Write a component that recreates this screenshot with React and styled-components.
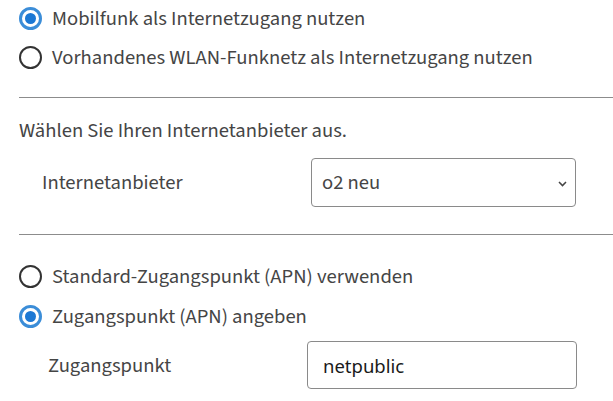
import React, { useState } from "react";
import styled, { createGlobalStyle } from "styled-components";

const GlobalStyle = createGlobalStyle`
  html, body {
    margin: 0;
    padding: 0;
    background: #fff;
  }
  body {
    font-family: "Source Sans 3", "Lato", "Liberation Sans", sans-serif;
    font-size: 20.6px;
    color: #454545;
  }
`;

const Page = styled.div`
  width: 613px;
  height: 401px;
  overflow: hidden;
  padding-left: 19px;
  box-sizing: border-box;
`;

const RadioRow = styled.label`
  display: flex;
  align-items: center;
  gap: 10px;
  height: ${(p) => p.$height || 40}px;
  margin-top: ${(p) => p.$top || 0}px;
  cursor: pointer;
  white-space: nowrap;
`;

const RadioCircle = styled.span`
  width: 23px;
  height: 23px;
  box-sizing: border-box;
  border-radius: 50%;
  border: ${(p) => (p.$checked ? "3px solid #3b8dd8" : "2px solid #333")};
  background: #fff;
  display: flex;
  align-items: center;
  justify-content: center;
  flex-shrink: 0;
  &::after {
    content: "";
    width: 11px;
    height: 11px;
    border-radius: 50%;
    background: #1c78d4;
    display: ${(p) => (p.$checked ? "block" : "none")};
  }
`;

const Divider = styled.hr`
  border: 0;
  height: 1px;
  background: #8c8c8c;
  margin: ${(p) => p.$top || 0}px 0 0 0;
`;

const Intro = styled.p`
  margin: 20px 0 0 0;
  line-height: 26px;
  white-space: nowrap;
`;

const FieldRow = styled.div`
  display: flex;
  align-items: center;
  margin-top: ${(p) => p.$top || 0}px;
  padding-left: ${(p) => p.$indent}px;
`;

const FieldLabel = styled.span`
  width: ${(p) => p.$width}px;
  flex-shrink: 0;
  white-space: nowrap;
`;

const SelectBox = styled.div`
  width: 265px;
  height: 49px;
  box-sizing: border-box;
  border: 1px solid #8a8a8a;
  border-radius: 4px;
  display: flex;
  align-items: center;
  padding: 0 8px 0 10px;
  background: #fff;
  cursor: pointer;
`;

const SelectValue = styled.span`
  flex: 1;
  padding-bottom: 1px;
`;

const Chevron = styled.svg`
  width: 9px;
  height: 6px;
  flex-shrink: 0;
  margin-top: 3px;
`;

const TextInput = styled.input`
  width: 270px;
  height: 48px;
  box-sizing: border-box;
  border: 1px solid #8a8a8a;
  border-radius: 4px;
  padding: 0 15px;
  font-family: "Noto Sans", "Open Sans", sans-serif;
  font-size: 18.5px;
  color: #1a1a1a;
  outline: none;
  background: #fff;
`;

function Radio({ checked, onSelect, children, height, top }) {
  return (
    <RadioRow $height={height} $top={top} onClick={onSelect}>
      <RadioCircle $checked={checked} />
      <span>{children}</span>
    </RadioRow>
  );
}

export default function App() {
  const [access, setAccess] = useState("mobil");
  const [apn, setApn] = useState("custom");
  const [apnValue, setApnValue] = useState("netpublic");

  return (
    <Page>
      <GlobalStyle />
      <Radio height={37} checked={access === "mobil"} onSelect={() => setAccess("mobil")}>
        Mobilfunk als Internetzugang nutzen
      </Radio>
      <Radio checked={access === "wlan"} onSelect={() => setAccess("wlan")}>
        Vorhandenes WLAN-Funknetz als Internetzugang nutzen
      </Radio>

      <Divider $top={20} />

      <Intro>Wählen Sie Ihren Internetanbieter aus.</Intro>
      <FieldRow $top={14} $indent={23}>
        <FieldLabel $width={269}>Internetanbieter</FieldLabel>
        <SelectBox>
          <SelectValue>o2 neu</SelectValue>
          <Chevron viewBox="0 0 9 6">
            <path d="M1 1 L4.5 4.6 L8 1" fill="none" stroke="#444" strokeWidth="1.5" />
          </Chevron>
        </SelectBox>
      </FieldRow>

      <Divider $top={27} />

      <Radio top={21} checked={apn === "standard"} onSelect={() => setApn("standard")}>
        Standard-Zugangspunkt (APN) verwenden
      </Radio>
      <Radio checked={apn === "custom"} onSelect={() => setApn("custom")}>
        Zugangspunkt (APN) angeben
      </Radio>
      <FieldRow $top={5} $indent={29}>
        <FieldLabel $width={259}>Zugangspunkt</FieldLabel>
        <TextInput value={apnValue} onChange={(e) => setApnValue(e.target.value)} />
      </FieldRow>
    </Page>
  );
}
